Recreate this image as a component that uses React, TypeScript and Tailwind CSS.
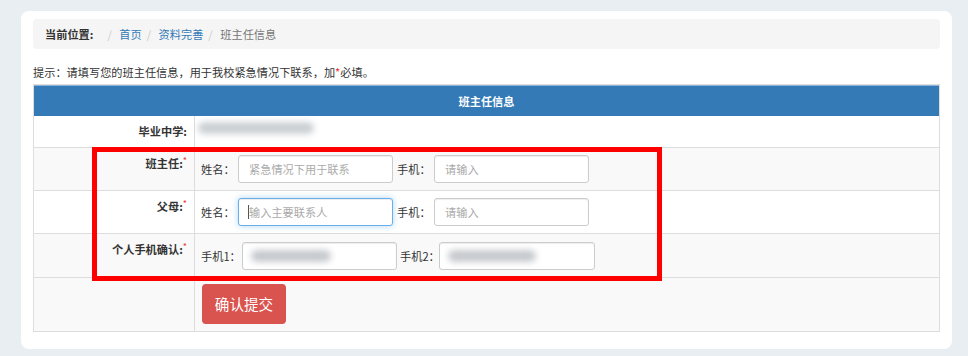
import React from "react";

const font = { fontFamily: '"Noto Sans CJK SC", "Noto Sans", sans-serif' };

function Label({ text, required }: { text: string; required?: boolean }) {
  return (
    <div className="w-[161px] shrink-0 border-r border-[#ddd] pt-[7px] pr-[7px] text-right font-bold leading-[16px] text-[#333]">
      {text}
      {required && <span className="relative top-[-4px] text-[9px] font-normal text-[#e33]">*</span>}
    </div>
  );
}

function Field({ label, labelW, placeholder, width = "w-[155px]", focused, blur, blurW }: { label: string; labelW: string; placeholder?: string; width?: string; focused?: boolean; blur?: boolean; blurW?: string }) {
  return (
    <div className="flex h-[28px] items-center">
      <span className={"shrink-0 whitespace-nowrap text-[#333] " + labelW}>{label}</span>
      <div className={"relative h-[28px] shrink-0 " + width}>
        <input
          readOnly
          placeholder={placeholder}
          className={
            "h-full w-full rounded-[3px] border bg-white pl-[10px] text-[11.2px] text-[#555] outline-none placeholder:text-[#aaa] " +
            (focused
              ? "border-[#66afe9] shadow-[inset_0_1px_1px_rgba(0,0,0,0.075),0_0_6px_rgba(102,175,233,0.5)]"
              : "border-[#ccc] shadow-[inset_0_1px_1px_rgba(0,0,0,0.075)]")
          }
          style={font}
        />
        {focused && <span className="absolute left-[10px] top-[7px] h-[14px] w-px bg-[#555]" />}
        {blur && (
          <span className={"absolute left-[9px] top-[8px] h-[12px] rounded-full bg-[#c6c9cd] blur-[3px] " + (blurW ?? "w-[80px]")} />
        )}
      </div>
    </div>
  );
}

export default function App() {
  return (
    <div className="relative min-h-[356px] w-[968px] bg-[#e8eef2] pl-[21px] pr-[16px] pt-[11px] text-[11.2px] text-[#333]" style={font}>
      <div className="rounded-[8px] bg-white px-[12px] pb-[17px] pt-[8px]">
        {/* breadcrumb */}
        <div className="flex h-[30px] items-center rounded-[4px] bg-[#f5f5f5] pl-[12px] leading-[16px]">
          <span className="mr-[9px] font-bold">当前位置:</span>
          <span className="px-[5px] text-[#ccc]">/&nbsp;</span>
          <span className="text-[#337ab7]">首页</span>
          <span className="px-[5px] text-[#ccc]">/&nbsp;</span>
          <span className="text-[#337ab7]">资料完善</span>
          <span className="px-[5px] text-[#ccc]">/&nbsp;</span>
          <span className="text-[#777]">班主任信息</span>
        </div>

        {/* hint */}
        <div className="mt-[15px] h-[20px] leading-[16px]">
          提示：请填写您的班主任信息，用于我校紧急情况下联系，加<span className="text-[#e33]">*</span>必填。
        </div>

        {/* table */}
        <div className="border border-[#ddd]">
          <div className="flex h-[31px] items-center justify-center border-t border-[#8fb3d9] bg-[#337ab7] font-bold text-white">
            班主任信息
          </div>

          <div className="flex h-[32px] border-b border-[#ddd] bg-white">
            <Label text="毕业中学:" />
            <div className="pl-[3px] pt-[6px]">
              <span className="block h-[12px] w-[116px] rounded-full bg-[#cbcfd3] blur-[3px]" />
            </div>
          </div>

          <div className="flex h-[43px] border-b border-[#ddd] bg-[#f9f9f9]">
            <Label text="班主任:" required />
            <div className="flex items-start gap-[4px] pl-[6px] pt-[7px]">
              <Field label="姓名：" labelW="w-[37px]" placeholder="紧急情况下用于联系" />
              <Field label="手机：" labelW="w-[37px]" placeholder="请输入" />
            </div>
          </div>

          <div className="flex h-[43px] border-b border-[#ddd] bg-white">
            <Label text="父母:" required />
            <div className="flex items-start gap-[4px] pl-[6px] pt-[7px]">
              <Field label="姓名：" labelW="w-[37px]" placeholder="输入主要联系人" focused />
              <Field label="手机：" labelW="w-[37px]" placeholder="请输入" />
            </div>
          </div>

          <div className="flex h-[44px] border-b border-[#ddd] bg-[#f9f9f9]">
            <Label text="个人手机确认:" required />
            <div className="flex items-start gap-[3px] pl-[6px] pt-[8px]">
              <Field label="手机1：" labelW="w-[41px]" blur blurW="w-[80px]" />
              <Field label="手机2：" labelW="w-[39px]" width="w-[156px]" blur blurW="w-[88px]" />
            </div>
          </div>

          <div className="flex h-[53px] bg-[#f9f9f9]">
            <div className="w-[161px] shrink-0 border-r border-[#ddd]" />
            <div className="pl-[7px] pt-[6px]">
              <button className="h-[40px] w-[84px] rounded-[4px] bg-[#d9534f] text-[14.6px] text-white" style={font}>
                确认提交
              </button>
            </div>
          </div>
        </div>
      </div>

      {/* red annotation box */}
      <div className="pointer-events-none absolute left-[92px] top-[147px] h-[134px] w-[570px] border-[5px] border-[#ff0000]" />
    </div>
  );
}
